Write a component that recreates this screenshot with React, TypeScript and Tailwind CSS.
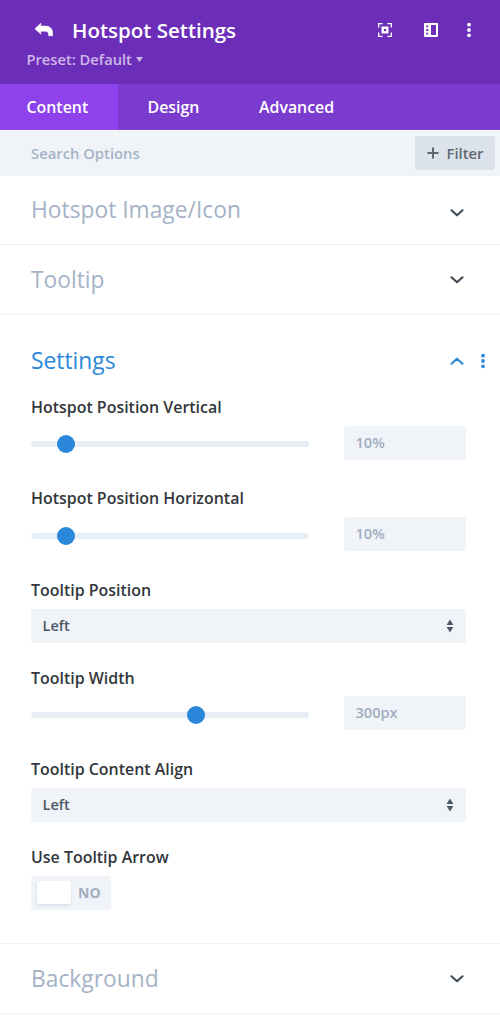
import React, { useState } from "react";

function ChevronIcon({ up = false }: { up?: boolean }) {
  return (
    <svg className="block h-[8px] w-[14px]" viewBox="0 0 14 8" fill="none" stroke="currentColor" strokeWidth="2.1" strokeLinecap="round" strokeLinejoin="round">
      <path d={up ? "M1.5 6.7L7 1.7L12.5 6.7" : "M1.5 1.3L7 6.3L12.5 1.3"} />
    </svg>
  );
}

function DotsIcon() {
  return (
    <svg className="block h-[16px] w-[6px]" viewBox="0 0 6 16" fill="currentColor">
      <circle cx="3" cy="2.7" r="1.9" />
      <circle cx="3" cy="8" r="1.9" />
      <circle cx="3" cy="13.3" r="1.9" />
    </svg>
  );
}

function Header() {
  return (
    <header className="h-[84px] bg-[#6c2eb9] text-white">
      <div className="flex h-[47px] items-center pt-[13px] pl-[34px] pr-[28px]">
        <svg className="block h-[16px] w-[20px] shrink-0" viewBox="0 0 20 16" fill="currentColor">
          <path d="M0.9 6.7L6.8 1.2V4.1H11.5C16 4.1 18.6 7 18.6 11V13.8H14.6V12.4C14.6 10.2 13.4 9.2 11.2 9.2H6.8V12.1Z" stroke="currentColor" strokeWidth="0.6" strokeLinejoin="round" />
        </svg>
        <h1 className="ml-[18px] whitespace-nowrap text-[20.5px] leading-[28px] font-semibold">Hotspot Settings</h1>
        <div className="ml-auto flex items-center">
          <svg className="block h-[14px] w-[14px]" viewBox="0 0 14 14" fill="none" stroke="currentColor">
            <path d="M4.6 0.7H0.7V4.6M9.4 0.7H13.3V4.6M4.6 13.3H0.7V9.4M9.4 13.3H13.3V9.4" strokeWidth="1.3" />
            <rect x="4.7" y="4.7" width="4.6" height="4.6" strokeWidth="2.4" />
          </svg>
          <svg className="ml-[32px] block h-[14px] w-[14px]" viewBox="0 0 14 14">
            <rect width="14" height="14" rx="1" fill="currentColor" />
            <path d="M7 2H12V12H7ZM2.2 2.4H4.2V4.2H2.2ZM2.2 6.1H4.2V7.9H2.2ZM2.2 9.8H4.2V11.6H2.2Z" fill="#6c2eb9" />
          </svg>
          <span className="ml-[28px]"><DotsIcon /></span>
        </div>
      </div>
      <div className="flex h-[24px] items-center pl-[26.5px] text-[#cdb7e7]">
        <span className="whitespace-nowrap text-[14.7px] leading-[20px] font-semibold">Preset: Default</span>
        <svg className="ml-[4.5px] mt-[1px] h-[5px] w-[7px]" viewBox="0 0 7 5" fill="currentColor"><path d="M0 0H7L3.5 5Z" /></svg>
      </div>
    </header>
  );
}

function Tabs() {
  return (
    <nav className="flex h-[46px] bg-[#7c3bcf] text-[15.9px] leading-[22px] font-semibold text-white">
      <button className="flex w-[118px] items-center bg-[#8e42eb] pl-[26.5px] whitespace-nowrap">Content</button>
      <button className="flex w-[111px] items-center pl-[29.5px] whitespace-nowrap">Design</button>
      <button className="flex items-center pl-[30px] whitespace-nowrap">Advanced</button>
    </nav>
  );
}

function SearchBar() {
  return (
    <div className="mt-[1px] flex h-[44.5px] items-center bg-[#f0f3f8] pl-[31px] pr-[5.5px] text-[14.8px] leading-[20px] font-semibold">
      <span className="mt-[-1px] whitespace-nowrap text-[#a5b3c6]">Search Options</span>
      <button className="mt-[-1px] ml-auto flex h-[34px] w-[79.5px] items-center rounded-[3px] bg-[#dce2ea] pl-[12px] text-[#5c6875]">
        <svg className="mr-[7.5px] h-[12px] w-[12px]" viewBox="0 0 12 12" stroke="currentColor" strokeWidth="2"><path d="M6 0.5V11.5M0.5 6H11.5" /></svg>
        Filter
      </button>
    </div>
  );
}

function ClosedSection({ title, offset }: { title: string; offset: string }) {
  return (
    <section className="flex h-[69.5px] items-center justify-between border-b border-[#eef2f8] pl-[31px] pr-[36px]">
      <h2 className="mt-[1px] whitespace-nowrap text-[22.8px] leading-[32px] font-normal text-[#a5b3c6]">{title}</h2>
      <span className={`text-[#3e4b57] ${offset}`}><ChevronIcon /></span>
    </section>
  );
}

function Label({ children }: { children: React.ReactNode }) {
  return <div className="mb-[7.8px] whitespace-nowrap text-[15.95px] leading-[22px] font-semibold text-[#32373c]">{children}</div>;
}

function RangeField({ label, value, percent }: { label: string; value: string; percent: number }) {
  return (
    <div className="h-[91.4px]">
      <Label>{label}</Label>
      <div className="flex h-[34px] items-center justify-between">
        <div className="relative mt-[3px] h-[6px] w-[278px] rounded-full bg-[#e7eef5]">
          <div className="absolute -top-[6px] size-[18px] -translate-x-1/2 rounded-full bg-[#2b87da]" style={{ left: `${percent}%` }} />
        </div>
        <div className="flex h-full w-[122px] items-center rounded-[3px] bg-[#f0f3f8] pl-[11.5px] text-[14.6px] font-semibold text-[#a0aec0]">{value}</div>
      </div>
    </div>
  );
}

function SelectField({ label }: { label: string }) {
  return (
    <div className="h-[87.8px]">
      <Label>{label}</Label>
      <div className="flex h-[34px] items-center justify-between rounded-[3px] bg-[#f0f3f8] pl-[11.5px] pr-[12px] text-[14.6px] font-semibold text-[#4c5866]">
        Left
        <svg className="h-[14px] w-[8px]" viewBox="0 0 8 14" fill="currentColor"><path d="M4 0.5L7.4 6H0.6ZM4 13.5L7.4 8H0.6Z" /></svg>
      </div>
    </div>
  );
}

function Toggle() {
  const [on, setOn] = useState(false);
  return (
    <button onClick={() => setOn(!on)} className="flex h-[34px] w-[80px] items-center rounded-[3px] bg-[#f0f3f8] pl-[5.5px] text-[14px] font-bold text-[#a0aec0]">
      <span className="mr-[7.5px] h-[23px] w-[34px] rounded-[3px] bg-white shadow-[0_1px_3px_rgba(60,80,110,0.16)]" />
      {on ? "YES" : "NO"}
    </button>
  );
}

export default function App() {
  return (
    <main className="h-[1016px] w-[500px] overflow-hidden bg-white font-['Open_Sans',sans-serif]">
      <Header />
      <Tabs />
      <SearchBar />
      <ClosedSection title="Hotspot Image/Icon" offset="mt-[6px]" />
      <ClosedSection title="Tooltip" offset="mt-[2px]" />
      <section className="h-[629.5px] border-b border-[#eef2f8] pt-[30px] pl-[31px] pr-[34px]">
        <div className="-mr-[20px] mb-[19.5px] flex h-[32px] items-center text-[#2b87da]">
          <h2 className="mr-auto whitespace-nowrap text-[22.8px] leading-[32px] font-normal">Settings</h2>
          <span className="mr-[16px]"><ChevronIcon up /></span>
          <DotsIcon />
        </div>
        <RangeField label="Hotspot Position Vertical" value="10%" percent={12.5} />
        <RangeField label="Hotspot Position Horizontal" value="10%" percent={12.5} />
        <SelectField label="Tooltip Position" />
        <RangeField label="Tooltip Width" value="300px" percent={59.5} />
        <SelectField label="Tooltip Content Align" />
        <Label>Use Tooltip Arrow</Label>
        <Toggle />
      </section>
      <ClosedSection title="Background" offset="mt-[2px]" />
    </main>
  );
}
